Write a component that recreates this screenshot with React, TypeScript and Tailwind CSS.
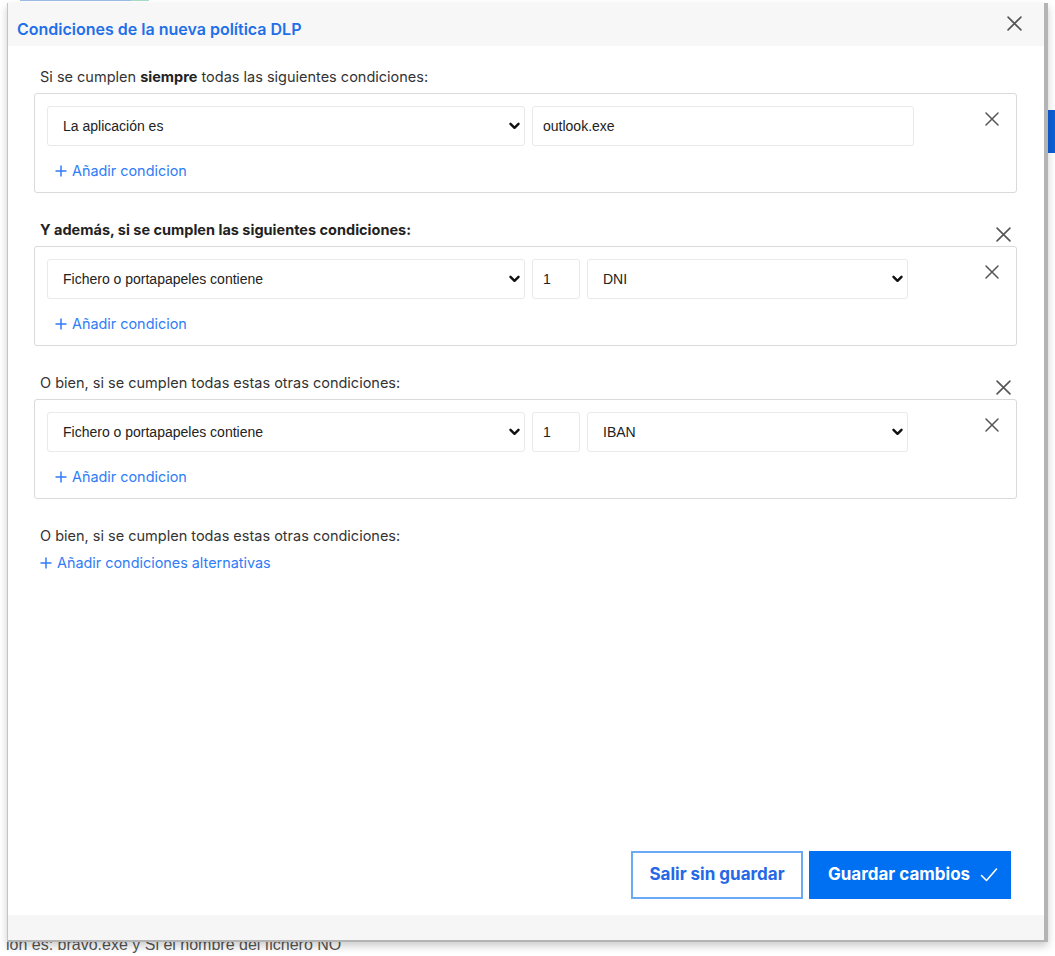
import React from "react";

const XIcon = ({ size = 14 }: { size?: number }) => (
  <svg width={size} height={size} viewBox="0 0 14 14" fill="none">
    <path d="M1 1L13 13M13 1L1 13" stroke="#555" strokeWidth="1.5" strokeLinecap="round" />
  </svg>
);

const Chevron = () => (
  <svg width="11" height="8" viewBox="0 0 11 8" fill="none">
    <path d="M1.5 1.8L5.5 5.8L9.5 1.8" stroke="#111" strokeWidth="2.4" strokeLinecap="round" strokeLinejoin="round" />
  </svg>
);

const Plus = () => (
  <svg width="12" height="12" viewBox="0 0 12 12" fill="none">
    <path d="M6 0.5V11.5M0.5 6H11.5" stroke="#2f7cf6" strokeWidth="1.5" />
  </svg>
);

const Check = () => (
  <svg width="18" height="16" viewBox="0 0 18 16" fill="none">
    <path d="M1.5 8.5L6.5 13.5L16.5 2" stroke="#fff" strokeWidth="1.6" strokeLinecap="round" strokeLinejoin="round" />
  </svg>
);

const Select = ({ label, w }: { label: string; w: string }) => (
  <div
    className={`${w} h-[40px] border border-[#e9e9e9] rounded-[3px] bg-white flex items-center justify-between pl-[15px] pr-[4px] text-[14px] text-[#222] font-['Liberation_Sans',Arial,sans-serif]`}
  >
    <span>{label}</span>
    <Chevron />
  </div>
);

const Field = ({ value, w }: { value: string; w: string }) => (
  <div
    className={`${w} h-[40px] border border-[#e9e9e9] rounded-[3px] bg-white flex items-center pl-[10px] text-[14px] text-[#222] font-['Liberation_Sans',Arial,sans-serif]`}
  >
    {value}
  </div>
);

const AddLink = ({ text }: { text: string }) => (
  <div className="flex items-center gap-[5px] h-[20px] text-[14.4px] text-[#2f7cf6]">
    <Plus />
    <span>{text}</span>
  </div>
);

const Box = ({ children }: { children: React.ReactNode }) => (
  <div className="h-[100px] border border-[#dadada] rounded-[3px] pt-[12px] pl-[12px] flex flex-col">
    <div className="flex items-start">
      <div className="flex gap-[7px]">{children}</div>
      <div className="flex-1" />
      <div className="mt-[6px] mr-[17px]">
        <XIcon />
      </div>
    </div>
    <div className="mt-[15px] pl-[8px]">
      <AddLink text="Añadir condicion" />
    </div>
  </div>
);

const LabelRow = ({ children, withX = false }: { children: React.ReactNode; withX?: boolean }) => (
  <div className="h-[20px] flex items-center justify-between pl-[6px] pr-[6px] text-[14.5px] text-[#333]">
    <div>{children}</div>
    {withX && (
      <div className="mt-[8px]">
        <XIcon size={15} />
      </div>
    )}
  </div>
);

export default function App() {
  return (
    <div className="w-[1055px] h-[956px] bg-white overflow-hidden font-['Inter','Noto_Sans',sans-serif]">
      <div className="h-[3px] flex items-start">
        <div className="w-[20px]" />
        <div className="w-[111px] h-[1px] bg-[#9dbde6]" />
        <div className="w-[18px] h-[1px] bg-[#a8dcc6]" />
      </div>
      <div className="flex">
        <div className="w-[7px]" />
        <div className="w-[1041px] h-[939px] flex flex-col border-l border-l-[#c4c4c4] border-r-[4px] border-r-[#b4b4b4] border-b-[2px] border-b-[#b4b4b4] shadow-[0_4px_8px_rgba(0,0,0,0.2)] relative z-10 bg-white">
          <div className="h-[43px] bg-[#f7f7f7] flex items-center justify-between pl-[9px] pr-[22px]">
            <span className="text-[16px] font-semibold text-[#1f6fe8] pt-[8px]">
              Condiciones de la nueva política DLP
            </span>
            <div className="pb-[2px]">
              <XIcon size={15} />
            </div>
          </div>
          <div className="flex-1 flex flex-col pl-[26px] pr-[27px] pt-[21px] pb-[16px]">
            <LabelRow>
              Si se cumplen <b className="font-bold text-[#222]">siempre</b> todas las siguientes condiciones:
            </LabelRow>
            <div className="mt-[6px]">
              <Box>
                <Select label="La aplicación es" w="w-[478px]" />
                <Field value="outlook.exe" w="w-[382px]" />
              </Box>
            </div>
            <div className="mt-[27px]">
              <LabelRow withX>
                <b className="font-bold text-[#222]">Y además, si se cumplen las siguientes condiciones:</b>
              </LabelRow>
            </div>
            <div className="mt-[6px]">
              <Box>
                <Select label="Fichero o portapapeles contiene" w="w-[478px]" />
                <Field value="1" w="w-[48px]" />
                <Select label="DNI" w="w-[321px]" />
              </Box>
            </div>
            <div className="mt-[27px]">
              <LabelRow withX>O bien, si se cumplen todas estas otras condiciones:</LabelRow>
            </div>
            <div className="mt-[6px]">
              <Box>
                <Select label="Fichero o portapapeles contiene" w="w-[478px]" />
                <Field value="1" w="w-[48px]" />
                <Select label="IBAN" w="w-[321px]" />
              </Box>
            </div>
            <div className="mt-[27px]">
              <LabelRow>O bien, si se cumplen todas estas otras condiciones:</LabelRow>
            </div>
            <div className="mt-[7px] pl-[6px]">
              <AddLink text="Añadir condiciones alternativas" />
            </div>
            <div className="flex-1" />
            <div className="flex justify-end gap-[6px] pr-[6px]">
              <button className="w-[172px] h-[48px] border-2 border-[#6aa9f6] bg-white text-[17px] font-bold text-[#2567e6]">
                Salir sin guardar
              </button>
              <button className="w-[202px] h-[48px] bg-[#0070f2] text-white text-[17px] font-bold flex items-center justify-between pl-[19px] pr-[13px]">
                <span>Guardar cambios</span>
                <Check />
              </button>
            </div>
          </div>
          <div className="h-[25px] bg-[#f6f6f6]" />
        </div>
        <div className="w-[7px] pt-[107px]">
          <div className="h-[43px] bg-[#0d5fd6]" />
        </div>
      </div>
      <div className="h-[12px] overflow-hidden pl-[6px]">
        <div className="-mt-[6px] text-[16px] leading-[18px] text-[#555] font-['Liberation_Sans',Arial,sans-serif] whitespace-nowrap">
          ión es: bravo.exe y Si el nombre del fichero NO
        </div>
      </div>
    </div>
  );
}
